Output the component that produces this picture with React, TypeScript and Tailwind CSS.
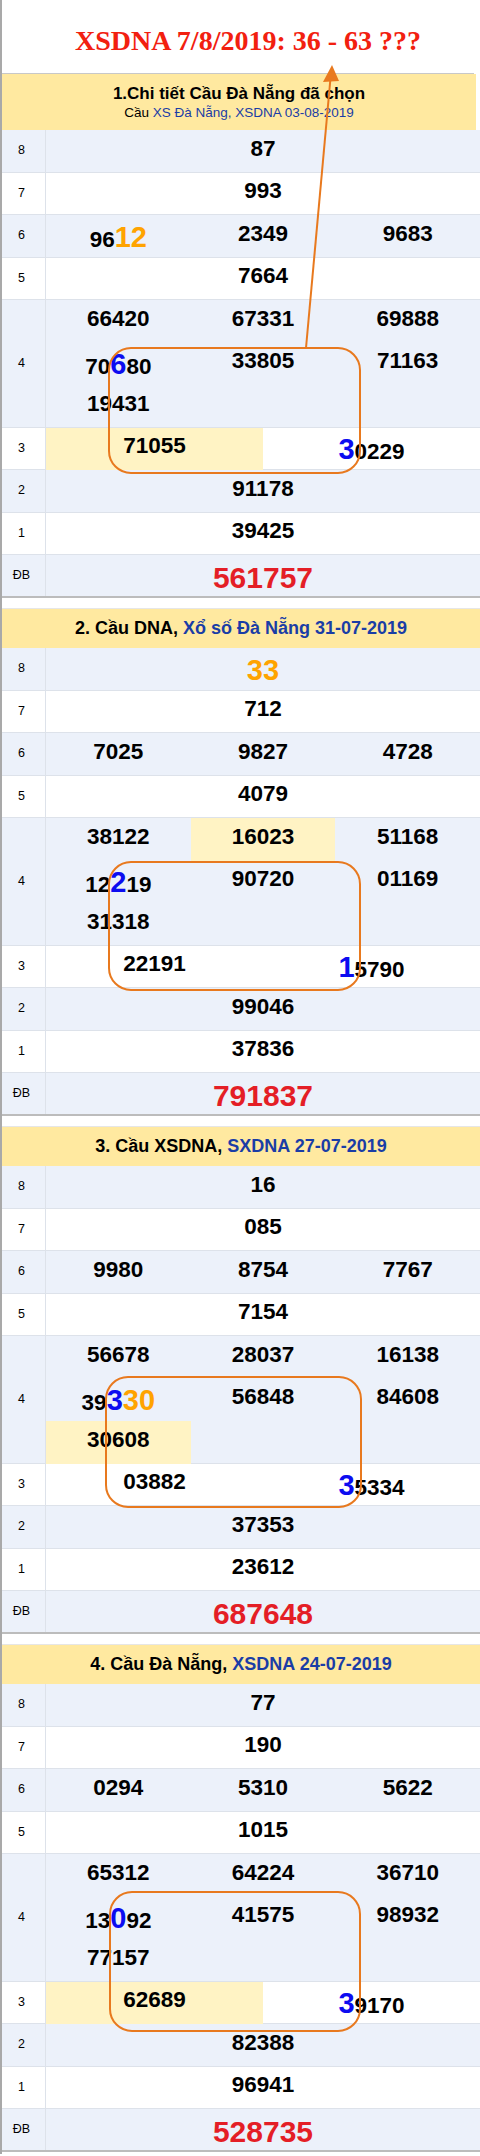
import type { ReactNode } from "react";

type Seg = string | [string, "b" | "o"];
type Cell = { s: Seg[]; hl?: boolean };

const c = (...s: Seg[]): Cell => ({ s });
const h = (...s: Seg[]): Cell => ({ s, hl: true });

type Board = {
  head: ReactNode;
  g8: Cell;
  g7: Cell;
  g6: Cell[];
  g5: Cell;
  g4: Cell[];
  g3: Cell[];
  g2: Cell;
  g1: Cell;
  db: string;
};

const BLUE = "text-[#1a3da6]";

const boards: Board[] = [
  {
    head: (
      <div className="flex h-[56px] w-[474px] flex-col items-center justify-center bg-[#ffe9a0]">
        <p className="text-[17px] font-bold leading-[20px] text-black">1.Chi tiết Cầu Đà Nẵng đã chọn</p>
        <p className="text-[13.5px] leading-[17px] text-black">
          Cầu <span className={BLUE}>XS Đà Nẵng, XSDNA 03-08-2019</span>
        </p>
      </div>
    ),
    g8: c("87"),
    g7: c("993"),
    g6: [c("96", ["12", "o"]), c("2349"), c("9683")],
    g5: c("7664"),
    g4: [c("66420"), c("67331"), c("69888"), c("70", ["6", "b"], "80"), c("33805"), c("71163"), c("19431")],
    g3: [h("71055"), c(["3", "b"], "0229")],
    g2: c("91178"),
    g1: c("39425"),
    db: "561757",
  },
  {
    head: (
      <Head>
        2. Cầu DNA, <span className={BLUE}>Xổ số Đà Nẵng 31-07-2019</span>
      </Head>
    ),
    g8: c(["33", "o"]),
    g7: c("712"),
    g6: [c("7025"), c("9827"), c("4728")],
    g5: c("4079"),
    g4: [c("38122"), h("16023"), c("51168"), c("12", ["2", "b"], "19"), c("90720"), c("01169"), c("31318")],
    g3: [c("22191"), c(["1", "b"], "5790")],
    g2: c("99046"),
    g1: c("37836"),
    db: "791837",
  },
  {
    head: (
      <Head>
        3. Cầu XSDNA, <span className={BLUE}>SXDNA 27-07-2019</span>
      </Head>
    ),
    g8: c("16"),
    g7: c("085"),
    g6: [c("9980"), c("8754"), c("7767")],
    g5: c("7154"),
    g4: [c("56678"), c("28037"), c("16138"), c("39", ["3", "b"], ["30", "o"]), c("56848"), c("84608"), h("30608")],
    g3: [c("03882"), c(["3", "b"], "5334")],
    g2: c("37353"),
    g1: c("23612"),
    db: "687648",
  },
  {
    head: (
      <Head>
        4. Cầu Đà Nẵng, <span className={BLUE}>XSDNA 24-07-2019</span>
      </Head>
    ),
    g8: c("77"),
    g7: c("190"),
    g6: [c("0294"), c("5310"), c("5622")],
    g5: c("1015"),
    g4: [c("65312"), c("64224"), c("36710"), c("13", ["0", "b"], "92"), c("41575"), c("98932"), c("77157")],
    g3: [h("62689"), c(["3", "b"], "9170")],
    g2: c("82388"),
    g1: c("96941"),
    db: "528735",
  },
];

function Head({ children }: { children: ReactNode }) {
  return (
    <div className="flex h-[40.5px] items-center justify-center border-t border-[#e6e6e6] bg-[#ffe9a0] text-[18px] font-bold text-black">
      <p>{children}</p>
    </div>
  );
}

function Num({ cell }: { cell: Cell }) {
  return (
    <div
      className={`flex h-[42.5px] items-start justify-center pt-[7.5px] ${cell.hl ? "bg-[#fff3c4]" : ""}`}
    >
      <span className="text-[22.5px] font-bold leading-none text-black">
        {cell.s.map((seg, i) =>
          typeof seg === "string" ? (
            <span key={i}>{seg}</span>
          ) : (
            <span
              key={i}
              className={`text-[29px] ${seg[1] === "b" ? "text-[#0c0cf0]" : "text-[#ffa300]"}`}
            >
              {seg[0]}
            </span>
          )
        )}
      </span>
    </div>
  );
}

function Row({
  label,
  blue,
  last,
  tall,
  children,
}: {
  label: string;
  blue: boolean;
  last?: boolean;
  tall?: boolean;
  children: ReactNode;
}) {
  return (
    <div
      className={`flex ${tall ? "h-[127.5px]" : "h-[42.5px]"} ${blue ? "bg-[#ecf1fa]" : "bg-white"} ${
        last ? "border-b-2 border-[#bcbcbc]" : "border-b border-[#dde2ea]"
      }`}
    >
      <div className="flex w-[44px] shrink-0 items-center justify-center border-r border-[#dde2ea] pr-[4px] text-[12.5px] text-black">
        {label}
      </div>
      <div className="flex-1">{children}</div>
    </div>
  );
}

function BoardView({ b }: { b: Board }) {
  return (
    <section>
      {b.head}
      <Row label="8" blue>
        <Num cell={b.g8} />
      </Row>
      <Row label="7" blue={false}>
        <Num cell={b.g7} />
      </Row>
      <Row label="6" blue>
        <div className="grid grid-cols-3">
          {b.g6.map((x, i) => (
            <Num key={i} cell={x} />
          ))}
        </div>
      </Row>
      <Row label="5" blue={false}>
        <Num cell={b.g5} />
      </Row>
      <Row label="4" blue tall>
        <div className="grid grid-cols-3">
          {b.g4.map((x, i) => (
            <Num key={i} cell={x} />
          ))}
        </div>
      </Row>
      <Row label="3" blue={false}>
        <div className="grid grid-cols-2">
          {b.g3.map((x, i) => (
            <Num key={i} cell={x} />
          ))}
        </div>
      </Row>
      <Row label="2" blue>
        <Num cell={b.g2} />
      </Row>
      <Row label="1" blue={false}>
        <Num cell={b.g1} />
      </Row>
      <Row label="ĐB" blue last>
        <div className="flex h-[42.5px] items-start justify-center pt-[7.5px]">
          <span className="text-[30px] font-bold leading-none text-[#e41e26]">{b.db}</span>
        </div>
      </Row>
    </section>
  );
}

function Marks() {
  const stroke = "#e8791e";
  return (
    <svg
      className="pointer-events-none absolute left-0 top-0"
      width={480}
      height={2156}
      viewBox="0 0 480 2156"
      fill="none"
    >
      <rect x={107} y={348} width={251} height={125} rx={22} stroke={stroke} strokeWidth={2} />
      <rect x={107} y={862} width={251} height={128} rx={22} stroke={stroke} strokeWidth={2} />
      <rect x={104} y={1377} width={255} height={130} rx={22} stroke={stroke} strokeWidth={2} />
      <rect x={108} y={1892} width={250} height={139} rx={22} stroke={stroke} strokeWidth={2} />
      <line x1={304} y1={348} x2={328.5} y2={78} stroke={stroke} strokeWidth={2} />
      <polygon points="330,65 321,82 337,81" fill={stroke} />
    </svg>
  );
}

export default function App() {
  return (
    <div
      className="relative w-[480px] border-l-2 border-[#a9a9a9] bg-white pb-[2px]"
      style={{ fontFamily: '"Liberation Sans", Arial, sans-serif' }}
    >
      <div className="h-[74px] w-[472px] border-b border-[#c8c8c8] pl-[20px] pt-[27px] text-center">
        <h1
          className="text-[28px] font-bold leading-none text-[#f2200f]"
          style={{ fontFamily: '"Liberation Serif", "Times New Roman", serif' }}
        >
          XSDNA 7/8/2019: 36 - 63 ???
        </h1>
      </div>
      <div className="flex flex-col gap-[10px]">
        {boards.map((b, i) => (
          <BoardView key={i} b={b} />
        ))}
      </div>
      <Marks />
    </div>
  );
}
